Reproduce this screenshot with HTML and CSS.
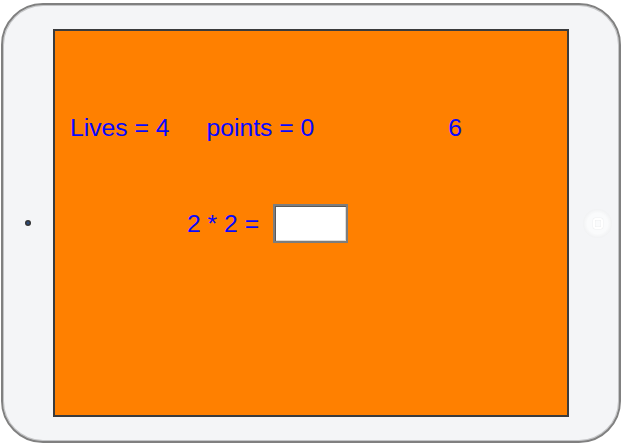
FILE: index.html
```html
<!DOCTYPE html>
<html>
<head>
<meta charset="utf-8">
<link rel="stylesheet" href="styles.css">
</head>
<body>
<div class="device">
  <div class="camera"></div>
  <div class="screen">
    <div class="stats">
      <span class="lives">Lives = 4</span>
      <span class="points">points = 0</span>
      <span class="timer">6</span>
    </div>
    <div class="question">
      <span class="expr">2 * 2 =</span>
      <input class="answer" type="text">
    </div>
  </div>
  <div class="home"><div class="home-square"></div></div>
</div>
</body>
</html>
```
FILE: styles.css
```css
html, body {
  margin: 0;
  padding: 0;
  background: #ffffff;
}
body {
  width: 625px;
  height: 444px;
  overflow: hidden;
}
.device {
  box-sizing: border-box;
  width: 620px;
  height: 440px;
  margin: 3px 0 0 1px;
  border: 2px solid #808080;
  border-radius: 42px;
  background: #f4f5f7;
  box-shadow: inset 0 0 0 1px #c4c5c7;
  display: flex;
  align-items: center;
  padding-left: 22px;
}
.camera {
  width: 6px;
  height: 6px;
  border-radius: 50%;
  background: radial-gradient(circle, #2c4a78 0, #2c4a78 1px, #333 2px);
  flex: none;
}
.screen {
  box-sizing: border-box;
  width: 516px;
  height: 388px;
  margin-left: 22px;
  border: 2px solid #3a3b3d;
  background: #ff8000;
  flex: none;
  padding-top: 83px;
  font-family: "Liberation Sans", Arial, sans-serif;
  font-size: 24.7px;
  color: #0808ff;
}
.stats {
  display: flex;
  line-height: 28px;
  padding-left: 15px;
}
.points {
  margin-left: 37px;
}
.timer {
  margin-left: 134px;
}
.question {
  display: flex;
  align-items: center;
  margin-top: 62px;
  padding-left: 132px;
  height: 39px;
  line-height: 28px;
}
.answer {
  box-sizing: border-box;
  width: 75px;
  height: 39px;
  margin: 0 0 0 14px;
  padding: 0;
  border: 2px solid #7d7d7d;
  box-shadow: inset 1px 1px 0 #5a5a5a, inset -1px -1px 0 #dcdcdc;
  background: #ffffff;
  outline: none;
}
.home {
  box-sizing: border-box;
  width: 29px;
  height: 29px;
  margin-left: 14px;
  border-radius: 50%;
  background: radial-gradient(circle, #fafbfc 50%, #e4e5e7 100%);
  display: flex;
  align-items: center;
  justify-content: center;
  flex: none;
}
.home-square {
  box-sizing: border-box;
  width: 10px;
  height: 11px;
  border: 2px solid #ffffff;
  border-radius: 3px;
  box-shadow: 0 0 1px #c8c9cb, inset 0 0 1px #c8c9cb;
}
```
